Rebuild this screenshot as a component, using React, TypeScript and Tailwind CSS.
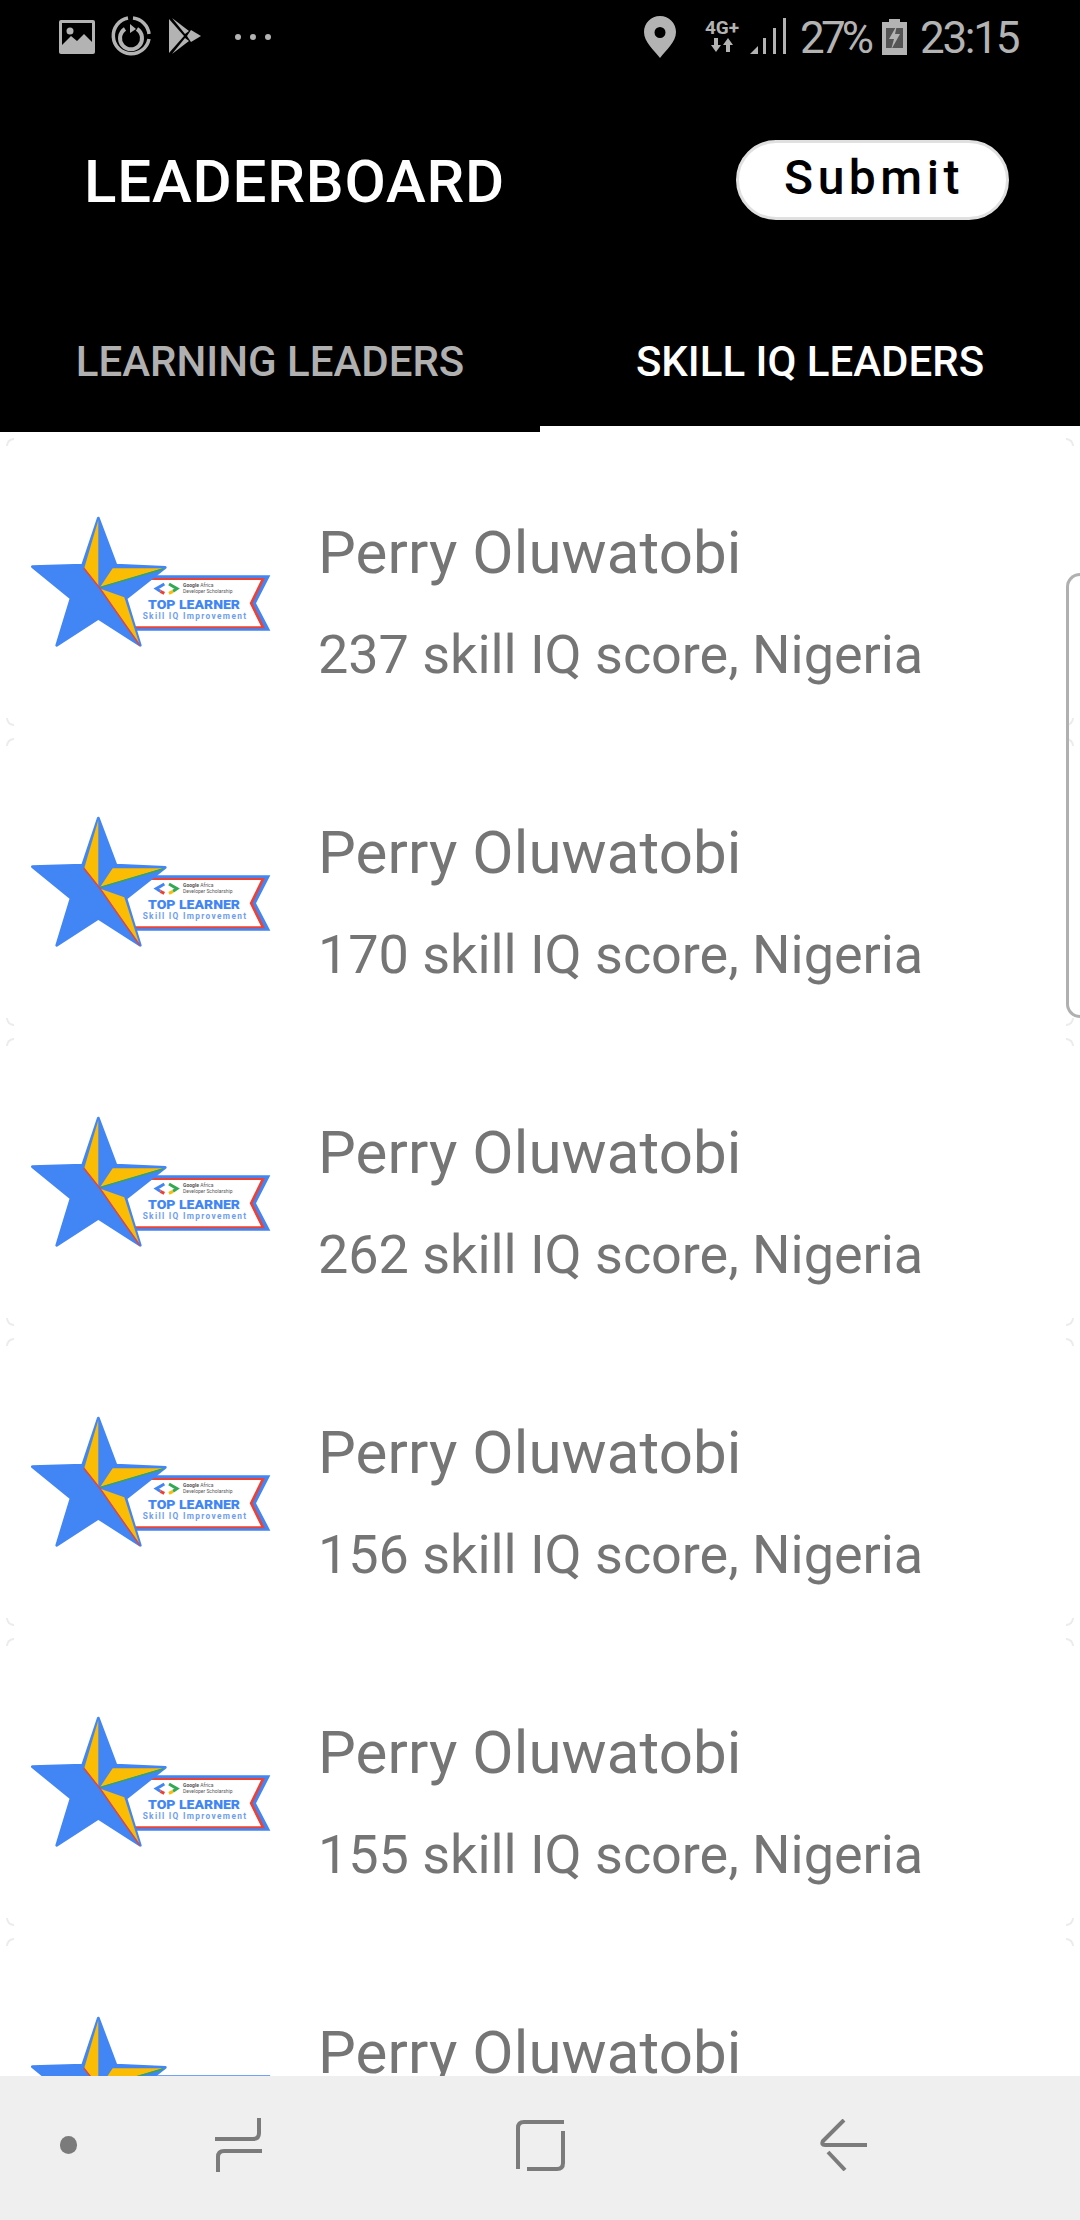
const scores = [237, 170, 262, 156, 155, 148];

function Badge() {
  return (
    <svg width="280" height="160" viewBox="0 0 840 480" className="shrink-0 -mt-[4px]">
      <path d="M340 226H778L735 310L778 392H340Z" fill="#4285f4" />
      <path d="M340 234H762L725 310L762 385H340Z" fill="#ea4335" />
      <path d="M340 240H750L716 310L750 379H340Z" fill="#ffffff" />
      <path d="M262 54L315 195L463 202L345 295L388 436L262 355L137 436L180 295L64 200L215 195Z" fill="#4285f4" stroke="#4285f4" strokeWidth="8" strokeLinejoin="round" />
      <path d="M262 60V258L220 203Z" fill="#fbbc04" />
      <path d="M268 260L305 205L456 205Z" fill="#fbbc04" />
      <path d="M268 266L340 292L384 428Z" fill="#fbbc04" />
      <path d="M218 204L266 264L386 436" fill="none" stroke="#ea4335" strokeWidth="4" />
      <path d="M268 262L456 207" fill="none" stroke="#34a853" strokeWidth="4" />
      <path d="M460 252L436 266L448 274" fill="none" stroke="#4285f4" strokeWidth="9" />
      <path d="M460 280L448 274" fill="none" stroke="#ea4335" strokeWidth="9" />
      <path d="M474 252L498 266L486 274" fill="none" stroke="#34a853" strokeWidth="9" />
      <path d="M474 280L486 274" fill="none" stroke="#fbbc04" strokeWidth="9" />
      <text x="516" y="261" fontSize="15" fontWeight="700" fill="#555" fontFamily="Roboto, sans-serif">Google <tspan fontWeight="400">Africa</tspan></text>
      <text x="516" y="280" fontSize="15" fill="#555" fontFamily="Roboto, sans-serif">Developer Scholarship</text>
      <text x="411" y="327" fontSize="38" fontWeight="900" fill="#4285f4" fontFamily="Roboto, sans-serif" textLength="276" lengthAdjust="spacingAndGlyphs">TOP LEARNER</text>
      <text x="395" y="357" fontSize="25" fontWeight="700" fill="#6f9ef0" fontFamily="Roboto, sans-serif" textLength="310">Skill IQ Improvement</text>
    </svg>
  );
}

function Corners() {
  const base = "absolute w-2 h-2 border-[#ececec]";
  return (
    <>
      <span className={`${base} left-0 top-0 border-l-2 border-t-2 rounded-tl-lg`} />
      <span className={`${base} right-0 top-0 border-r-2 border-t-2 rounded-tr-lg`} />
      <span className={`${base} left-0 bottom-0 border-l-2 border-b-2 rounded-bl-lg`} />
      <span className={`${base} right-0 bottom-0 border-r-2 border-b-2 rounded-br-lg`} />
    </>
  );
}

function Row({ score }: { score: number }) {
  return (
    <div className="relative shrink-0 h-[288px] mx-[6px] mb-3 bg-white flex items-center pl-[5px]">
      <Corners />
      <Badge />
      <div className="ml-[27px] leading-[102px] text-[#757575] whitespace-nowrap mt-[43px]">
        <div className="text-[60px] tracking-[0.1px]">Perry Oluwatobi</div>
        <div className="text-[54px] tracking-[-0.05px]">{score} skill IQ score, Nigeria</div>
      </div>
    </div>
  );
}

function StatusBar() {
  const c = "#b3b3b3";
  return (
    <div className="h-[74px] flex items-start pt-4 text-[#b3b3b3] relative">
      <svg width="36" height="34" viewBox="0 0 36 34" className="ml-[59px] mt-1">
        <rect width="36" height="34" rx="2" fill={c} />
        <rect x="3" y="3" width="30" height="22" fill="#000" />
        <circle cx="11" cy="11" r="3.5" fill={c} />
        <path d="M3 25L12 16L18 21L25 14L33 22V25Z" fill={c} />
      </svg>
      <svg width="40" height="40" viewBox="0 0 40 40" className="ml-[16px]">
        <path d="M22 2A18 18 0 0 1 38 18" fill="none" stroke={c} strokeWidth="3.5" />
        <path d="M38 23A18 18 0 1 1 17 2" fill="none" stroke={c} strokeWidth="3.5" />
        <path d="M14 13A11 11 0 1 0 26 13" fill="none" stroke={c} strokeWidth="4" />
        <path d="M19 8L25 13L19 17Z" fill={c} />
      </svg>
      <svg width="32" height="36" viewBox="0 0 32 36" className="ml-[18px] mt-[2px]">
        <path d="M0 1L15 18L0 35Z" fill={c} />
        <path d="M3 0L20 13L16 16Z" fill={c} />
        <path d="M3 36L20 23L16 20Z" fill={c} />
        <path d="M22 12L32 18L22 24L18 18Z" fill={c} />
      </svg>
      <svg width="36" height="6" viewBox="0 0 36 6" className="ml-[34px] mt-[18px]">
        <circle cx="3" cy="3" r="3" fill={c} />
        <circle cx="18" cy="3" r="3" fill={c} />
        <circle cx="33" cy="3" r="3" fill={c} />
      </svg>
      <svg width="32" height="42" viewBox="0 0 32 42" className="ml-[373px]">
        <path fillRule="evenodd" d="M16 0C7 0 0 7 0 16C0 26 10 34 16 42C22 34 32 26 32 16C32 7 25 0 16 0ZM16 11A5.500 5.500 0 1 1 16 22A5.500 5.500 0 0 1 16 11Z" fill={c} />
      </svg>
      <div className="ml-[26px] mt-[2px] w-[40px] flex flex-col items-center">
        <span className="text-[19px] leading-[20px] font-bold whitespace-nowrap">4G+</span>
        <svg width="22" height="14" viewBox="0 0 22 14">
          <path d="M3 0H7V7H10L5 14L0 7H3Z" fill={c} />
          <path d="M15 14H19V7H22L17 0L12 7H15Z" fill={c} />
        </svg>
      </div>
      <svg width="36" height="36" viewBox="0 0 36 36" className="ml-[8px] mt-[2px]">
        <path d="M0 36L8 28V36Z" fill={c} />
        <rect x="13" y="20" width="3" height="16" fill={c} />
        <rect x="23" y="10" width="3" height="26" fill={c} />
        <rect x="33" y="0" width="3" height="36" fill={c} />
      </svg>
      <span className="ml-[14px] text-[44px] leading-[44px] tracking-[-3.800px] whitespace-nowrap w-[70px]">27%</span>
      <svg width="25" height="36" viewBox="0 0 25 36" className="ml-[12px] mt-[3px]">
        <path d="M7 0H18V3H25V36H0V3H7Z" fill={c} />
        <rect x="4" y="9" width="17" height="20" fill="#555" />
        <path d="M15 6L7 20H12L9 31L18 15H13Z" fill={c} />
      </svg>
      <span className="ml-[13px] text-[44px] leading-[44px] tracking-[-2.300px] whitespace-nowrap">23:15</span>
    </div>
  );
}

function NavBar() {
  return (
    <div className="h-[144px] shrink-0 bg-[#efefef] flex items-center pb-[6px] relative z-10">
      <span className="ml-[60px] w-[17px] h-[18px] rounded-full bg-[#7b7b7b]" />
      <svg width="48" height="54" viewBox="0 0 48 54" className="ml-[138px] text-[#7b7b7b]" fill="none" stroke="currentColor" strokeWidth="4">
        <path d="M44 0V15Q44 21 38 21H0" />
        <path d="M47 33H9Q3 33 3 39V54" />
      </svg>
      <svg width="50" height="52" viewBox="0 0 50 52" className="ml-[253px] text-[#7b7b7b]" fill="none" stroke="currentColor" strokeWidth="4">
        <path d="M48 3H8Q2 3 2 9V50" />
        <path d="M47 12V44Q47 50 41 50H11" />
      </svg>
      <svg width="48" height="52" viewBox="0 0 48 52" className="ml-[254px] text-[#7b7b7b]" fill="none" stroke="currentColor" strokeWidth="4">
        <path d="M24 1L3 22Q1 26 5 26H47" />
        <path d="M8 33L25 51" />
      </svg>
    </div>
  );
}

export default function App() {
  return (
    <div className="w-[1080px] h-[2220px] flex flex-col overflow-hidden bg-white relative font-['Roboto',sans-serif]">
      <div className="bg-black shrink-0 h-[432px] flex flex-col">
        <StatusBar />
        <div className="h-[212px] flex items-center justify-between pl-[84px] pr-[71px]">
          <span className="text-[60px] font-medium tracking-[0.8px] text-white whitespace-nowrap mt-[3px]">LEADERBOARD</span>
          <button className="w-[273px] h-[80px] rounded-full bg-white border-[3px] border-[#e0e0e0] text-black text-[48px] leading-none font-medium tracking-[4.500px] pl-[3px] pb-[3px] -mt-[1px]">
            Submit
          </button>
        </div>
        <div className="flex flex-1">
          <div className="w-1/2 flex items-center justify-center text-[42px] font-medium text-[#b0b0b0] whitespace-nowrap pt-[4px]">LEARNING LEADERS</div>
          <div className="w-1/2 flex items-center justify-center text-[42px] font-medium text-white whitespace-nowrap border-b-[6px] border-white pt-[10px]">SKILL IQ LEADERS</div>
        </div>
      </div>
      <div className="flex-1 min-h-0 overflow-hidden pt-[6px]">
        {scores.map((s, i) => (
          <Row key={i} score={s} />
        ))}
      </div>
      <div className="absolute right-0 top-[573px] w-[14px] h-[445px] border-l-[3px] border-t-[3px] border-b-[3px] border-[#b0b0b0] rounded-l-[16px]" />
      <NavBar />
    </div>
  );
}
